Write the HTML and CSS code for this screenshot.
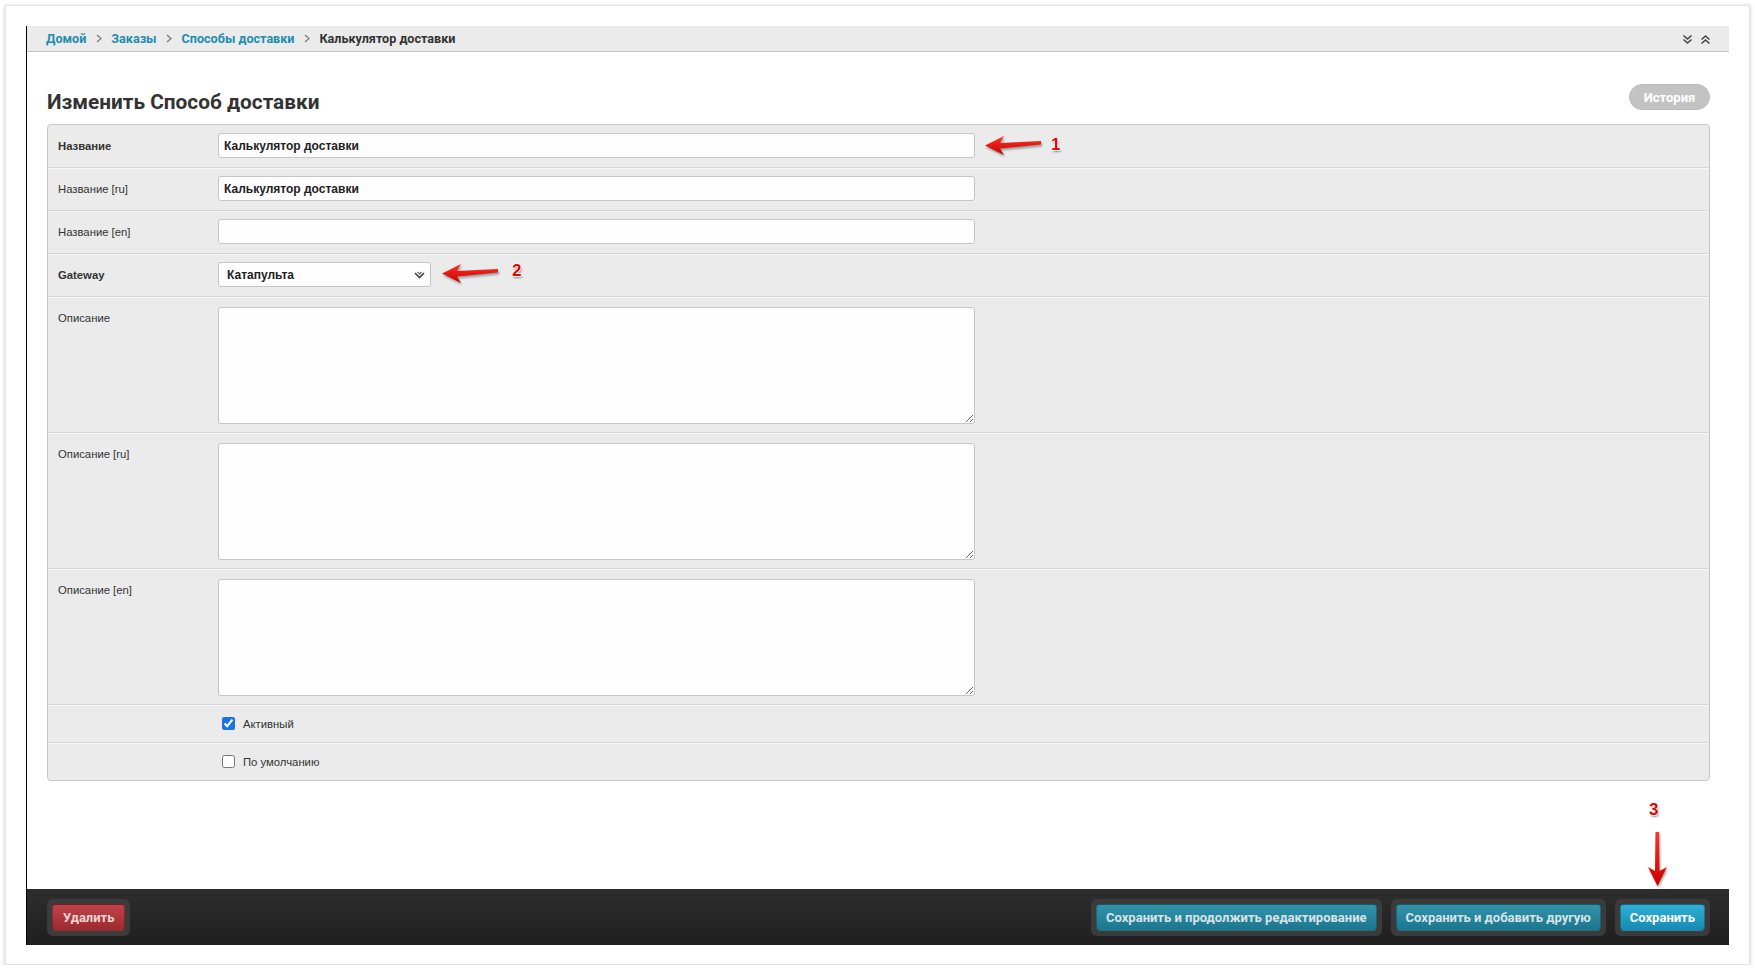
FILE: index.html
```html
<!DOCTYPE html>
<html lang="ru">
<head>
    <meta charset="UTF-8">
    <title>Изменить Способ доставки</title>
    <link rel="stylesheet" href="styles.css">
</head>
<body>
<div class="shot">
    <div class="page">
        <!-- хлебные крошки -->
        <div class="breadcrumbs">
            <div class="crumbs">
                <a href="#">Домой</a>
                <svg class="sep" width="6" height="9" viewBox="0 0 6 9"><polyline points="1,1 5,4.5 1,8" fill="none" stroke="#777" stroke-width="1.2"/></svg>
                <a href="#">Заказы</a>
                <svg class="sep" width="6" height="9" viewBox="0 0 6 9"><polyline points="1,1 5,4.5 1,8" fill="none" stroke="#777" stroke-width="1.2"/></svg>
                <a href="#">Способы доставки</a>
                <svg class="sep" width="6" height="9" viewBox="0 0 6 9"><polyline points="1,1 5,4.5 1,8" fill="none" stroke="#777" stroke-width="1.2"/></svg>
                <span class="current">Калькулятор доставки</span>
            </div>
            <div class="toggles">
                <svg width="11" height="11" viewBox="0 0 11 11"><polyline points="1.5,1.5 5.5,5 9.5,1.5" fill="none" stroke="#444" stroke-width="1.6"/><polyline points="1.5,5.5 5.5,9 9.5,5.5" fill="none" stroke="#444" stroke-width="1.6"/></svg>
                <svg width="11" height="11" viewBox="0 0 11 11"><polyline points="1.5,5.5 5.5,2 9.5,5.5" fill="none" stroke="#444" stroke-width="1.6"/><polyline points="1.5,9.5 5.5,6 9.5,9.5" fill="none" stroke="#444" stroke-width="1.6"/></svg>
            </div>
        </div>

        <div class="content">
            <div class="title-row">
                <h1>Изменить Способ доставки</h1>
                <a href="#" class="history-btn">История</a>
            </div>

            <div class="form">
                <div class="row">
                    <label class="required">Название</label>
                    <input type="text" class="field" value="Калькулятор доставки">
                </div>
                <div class="row">
                    <label>Название [ru]</label>
                    <input type="text" class="field" value="Калькулятор доставки">
                </div>
                <div class="row">
                    <label>Название [en]</label>
                    <input type="text" class="field" value="">
                </div>
                <div class="row">
                    <label class="required">Gateway</label>
                    <div class="select">
                        <span>Катапульта</span>
                        <svg width="11" height="8" viewBox="0 0 11 8"><polyline points="1,2 5.5,6.5 10,2" fill="none" stroke="#444" stroke-width="1.6"/><polyline points="3.5,1 5.5,3 7.5,1" fill="none" stroke="#666" stroke-width="1.2"/></svg>
                    </div>
                </div>
                <div class="row row-text">
                    <label>Описание</label>
                    <textarea class="area"></textarea>
                </div>
                <div class="row row-text">
                    <label>Описание [ru]</label>
                    <textarea class="area"></textarea>
                </div>
                <div class="row row-text">
                    <label>Описание [en]</label>
                    <textarea class="area"></textarea>
                </div>
                <div class="row row-check">
                    <span class="spacer"></span>
                    <input type="checkbox" id="active" checked>
                    <label for="active" class="check-label">Активный</label>
                </div>
                <div class="row row-check">
                    <span class="spacer"></span>
                    <input type="checkbox" id="default">
                    <label for="default" class="check-label">По умолчанию</label>
                </div>
            </div>
        </div>

        <div class="submit-bar">
            <div class="btn-wrap"><a href="#" class="btn btn-delete">Удалить</a></div>
            <div class="submit-right">
                <div class="btn-wrap"><a href="#" class="btn btn-save">Сохранить и продолжить редактирование</a></div>
                <div class="btn-wrap"><a href="#" class="btn btn-save">Сохранить и добавить другую</a></div>
                <div class="btn-wrap"><a href="#" class="btn btn-save btn-default">Сохранить</a></div>
            </div>
        </div>

        <!-- пометки поверх скриншота -->
        <svg class="mark-arrow arrow-1" width="56" height="20" viewBox="0 0 56 20">
            <defs><linearGradient id="ag1" x1="0" y1="0" x2="0" y2="1"><stop offset="0" stop-color="#ff3322"/><stop offset="1" stop-color="#c40000"/></linearGradient></defs>
            <path d="M0,10.5 L19,1 L15,8 L56,6 L56,9.5 L15,13.5 L19,20 Z" fill="url(#ag1)"/>
        </svg>
        <span class="mark-num num-1">1</span>

        <svg class="mark-arrow arrow-2" width="56" height="20" viewBox="0 0 56 20">
            <path d="M0,10.5 L19,1 L15,8 L56,6 L56,9.5 L15,13.5 L19,20 Z" fill="url(#ag1)"/>
        </svg>
        <span class="mark-num num-2">2</span>

        <svg class="mark-arrow arrow-3" width="20" height="54" viewBox="0 0 20 54">
            <path d="M10.5,54 L1,35 L8,39 L8.5,0 L12,0 L12.5,39 L20,35 Z" fill="url(#ag1)"/>
        </svg>
        <span class="mark-num num-3">3</span>
    </div>
</div>
</body>
</html>
```

FILE: styles.css
```css
body {
    margin: 0;
    background-color: #fff;
    font-family: Roboto, "Liberation Sans", sans-serif;
    color: #333;
}
.shot {
    margin: 5px 0 0 5px;
    width: 1745px;
    height: 960px;
    box-sizing: border-box;
    border: 1px solid #e4e4e4;
    box-shadow: 0 1px 4px rgba(0, 0, 0, 0.22);
    padding: 20px 0 0 20px;
    background-color: #fff;
}
.page {
    position: relative;
    width: 1703px;
    height: 919px;
    box-sizing: border-box;
    border-left: 1px solid #000;
    display: flex;
    flex-direction: column;
}
.breadcrumbs {
    height: 26px;
    box-sizing: border-box;
    background-color: #ebebeb;
    border-bottom: 1px solid #c6c6c6;
    display: flex;
    align-items: center;
    justify-content: space-between;
    padding: 0 18px 0 19px;
}
.crumbs {
    display: flex;
    align-items: center;
    gap: 8.5px;
    font-size: 12.6px;
    font-weight: bold;
}
.crumbs a {
    color: #1d8db0;
    text-decoration: none;
}
.crumbs .sep {
    margin: 0 1px;
}
.crumbs .current {
    color: #333;
}
.toggles {
    display: flex;
    gap: 7px;
    padding-top: 1px;
}
.content {
    flex: 1;
    padding: 0 19px 0 20px;
}
.title-row {
    height: 72px;
    box-sizing: border-box;
    padding-top: 32px;
    display: flex;
    justify-content: space-between;
    align-items: flex-start;
}
h1 {
    margin: 5px 0 0;
    font-size: 20.8px;
    line-height: 27px;
    color: #333;
}
.history-btn {
    width: 81px;
    height: 26px;
    box-sizing: border-box;
    border-radius: 13px;
    background-color: #c3c3c3;
    border: 1px solid #bdbdbd;
    color: #fff;
    font-size: 13px;
    font-weight: bold;
    text-decoration: none;
    display: flex;
    align-items: center;
    justify-content: center;
}
.form {
    background-color: #ebebeb;
    border: 1px solid #c9c9c9;
    border-radius: 4px;
}
.row {
    display: flex;
    align-items: center;
    padding: 8px 0 9px 10px;
    border-bottom: 1px solid #d5d5d5;
    box-shadow: inset 0 1px 0 #f6f6f6;
}
.row:first-child {
    box-shadow: none;
}
.row:last-child {
    border-bottom: none;
}
.row label {
    width: 160px;
    flex: none;
    font-family: "Liberation Sans", Arial, sans-serif;
    font-size: 11.3px;
    color: #333;
}
.row label.required {
    font-weight: bold;
}
.field {
    width: 757px;
    height: 25px;
    box-sizing: border-box;
    margin: 0;
    padding: 0 5px;
    border: 1px solid #c6c6c6;
    border-radius: 3px;
    background-color: #fdfdfd;
    font-family: "Liberation Sans", Arial, sans-serif;
    font-size: 12px;
    font-weight: bold;
    color: #222;
}
.select {
    width: 213px;
    height: 25px;
    box-sizing: border-box;
    border: 1px solid #c6c6c6;
    border-radius: 3px;
    background-color: #fdfdfd;
    display: flex;
    align-items: center;
    justify-content: space-between;
    padding: 0 5px 0 8px;
    font-family: "Liberation Sans", Arial, sans-serif;
    font-size: 12px;
    font-weight: bold;
    color: #222;
}
.row-text {
    align-items: flex-start;
    padding: 10px 0 8px 10px;
}
.row-text label {
    padding-top: 5px;
}
.area {
    width: 757px;
    height: 117px;
    box-sizing: border-box;
    margin: 0;
    border: 1px solid #c6c6c6;
    border-radius: 3px;
    background-color: #fdfdfd;
}
.row-check {
    height: 38px;
    box-sizing: border-box;
    padding: 0 0 0 10px;
}
.row-check:last-child {
    height: 37px;
}
.row-check .spacer {
    width: 160px;
    flex: none;
}
.row-check input {
    width: 13px;
    height: 13px;
    margin: 0 0 0 4px;
    accent-color: #1a73e8;
}
.row .check-label {
    width: auto;
    margin-left: 8px;
}
.submit-bar {
    height: 56px;
    box-sizing: border-box;
    background: linear-gradient(#2e2e2e, #1f1f1f);
    display: flex;
    align-items: center;
    justify-content: space-between;
    padding: 1px 19px 0 20px;
}
.submit-right {
    display: flex;
    gap: 9px;
}
.btn-wrap {
    background-color: #3b3b3b;
    border-radius: 6px;
    padding: 5px 5px;
}
.btn {
    height: 27px;
    box-sizing: border-box;
    display: flex;
    align-items: center;
    padding: 0 9px;
    border-radius: 4px;
    font-size: 13px;
    font-weight: bold;
    text-decoration: none;
    border: 1px solid rgba(0, 0, 0, 0.25);
}
.btn-delete {
    background: linear-gradient(#c0434a, #9c2a30);
    color: #ecd6d6;
    padding: 0 10px;
}
.btn-save {
    background: linear-gradient(#3194aa, #1b768e);
    color: #d9e3e6;
}
.btn-default {
    background: linear-gradient(#31b0d4, #1689b2);
    color: #fff;
}
.mark-arrow {
    position: absolute;
    filter: drop-shadow(1px 2px 1px rgba(0, 0, 0, 0.35));
}
.arrow-1 {
    left: 958px;
    top: 109px;
}
.arrow-2 {
    left: 415px;
    top: 237px;
}
.arrow-3 {
    left: 1620px;
    top: 806px;
}
.mark-num {
    position: absolute;
    font-family: "Liberation Sans", sans-serif;
    font-size: 17px;
    line-height: 20px;
    font-weight: bold;
    color: #e60000;
    text-shadow: 1px 0 #fff, -1px 0 #fff, 0 1px #fff, 0 -1px #fff, 1px 2px 2px rgba(0, 0, 0, 0.4);
}
.num-1 {
    left: 1024px;
    top: 109px;
}
.num-2 {
    left: 485px;
    top: 235px;
}
.num-3 {
    left: 1622px;
    top: 774px;
}
```
